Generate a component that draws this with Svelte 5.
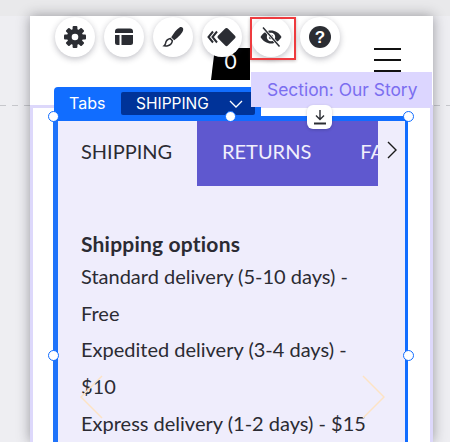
<script>
  const tools = ["gear", "layout", "brush", "layers", "eye", "help"];
  const handles = [
    { x: 53, y: 116 },
    { x: 230, y: 116 },
    { x: 408, y: 116 },
    { x: 53, y: 355 },
    { x: 408, y: 355 },
  ];
  const tabs = ["SHIPPING", "RETURNS", "FAQ"];
  const lines = [
    "Standard delivery (5-10 days) -",
    "Free",
    "Expedited delivery (3-4 days) -",
    "$10",
    "Express delivery (1-2 days) - $15",
  ];
</script>

<div class="app">
  <div class="topbar"></div>
  <div class="dash dash-left"></div>
  <div class="dash dash-right"></div>

  <div class="page">
    <header class="site-header">
      <div class="cart"><span>0</span></div>
      <div class="burger"><i></i><i></i><i></i></div>
    </header>
    <section class="section">
      <div class="tabs-widget">
        <div class="tab-strip">
          <div class="tab tab-active">{tabs[0]}</div>
          <div class="tab-rest">
            <span class="tab-second">{tabs[1]}</span>
            <span class="tab-third">{tabs[2]}</span>
          </div>
          <div class="tab-next">
            <svg width="12" height="18" viewBox="0 0 12 18"><path d="M2 1l8 8-8 8" fill="none" stroke="#1a1a1a" stroke-width="1.4" /></svg>
          </div>
        </div>
        <div class="tab-body">
          <div class="body-title">Shipping options</div>
          {#each lines as line}
            <p>{line}</p>
          {/each}
        </div>
      </div>
    </section>
  </div>

  <div class="toolbar">
    {#each tools as tool}
      <div class="tool">
        {#if tool === "gear"}
          <svg width="24" height="24" viewBox="0 0 24 24">
            <g fill="#2b2d33">
              <circle cx="12" cy="12" r="8" />
              {#each [0, 45, 90, 135, 180, 225, 270, 315] as a}
                <rect x="9.6" y="1" width="4.8" height="5" rx="1" transform="rotate({a} 12 12)" />
              {/each}
            </g>
            <circle cx="12" cy="12" r="3.3" fill="#fff" />
          </svg>
        {:else if tool === "layout"}
          <svg width="20" height="20" viewBox="0 0 20 20" fill="#2b2d33">
            <path d="M1 6V4.5A3 3 0 0 1 4 1.5h12a3 3 0 0 1 3 3V6z" />
            <path d="M1 8h4.5v10h-2A2.5 2.5 0 0 1 1 15.5z" />
            <path d="M7.5 8H19v7.5a2.5 2.5 0 0 1-2.5 2.5h-9z" />
          </svg>
        {:else if tool === "brush"}
          <svg width="24" height="24" viewBox="0 0 24 24" fill="#2b2d33">
            <path d="M18.5 2.5c1.8-1 4-.2 3.700 2.300-.4 2.800-4.600 7.500-9 10.500l-3-3c2.300-3.800 5.400-8.200 8.300-9.800z" />
            <path d="M9.300 13.600l2.100 2.100c-.4 2.600-2.300 4.500-4.500 5-1.300.3-2.700.3-3.800.1.900-.7 1.200-1.400 1.500-2.600.4-2.200 2.300-4 4.700-4.600z" fill="none" stroke="#2b2d33" stroke-width="1.5" />
          </svg>
        {:else if tool === "layers"}
          <svg width="32" height="24" viewBox="0 0 32 24">
            <path d="M20.5 3a1.800 1.800 0 0 1 1.300.5l7.200 7.200a1.800 1.800 0 0 1 0 2.600l-7.200 7.200a1.800 1.800 0 0 1-2.600 0L12 13.300a1.800 1.800 0 0 1 0-2.600l7.200-7.200a1.800 1.800 0 0 1 1.300-.5z" fill="#2b2d33" />
            <path d="M7 6.500L2.500 12l4.500 5.500M11 6.500L6.500 12l4.500 5.500" fill="none" stroke="#2b2d33" stroke-width="2" />
          </svg>
        {:else if tool === "eye"}
          <svg width="26" height="26" viewBox="0 0 26 26">
            <path d="M2.5 13C5 8.800 8.800 6.500 13 6.500s8 2.300 10.500 6.500c-2.500 4.200-6.300 6.500-10.500 6.500S5 17.200 2.500 13z" fill="#2b2d33" />
            <circle cx="13" cy="13" r="4.2" fill="#fff" />
            <circle cx="13" cy="13" r="2.2" fill="#2b2d33" />
            <path d="M5 3.500l16.500 19" stroke="#fff" stroke-width="3" />
            <path d="M5 3.500l16.500 19" stroke="#2b2d33" stroke-width="1.5" />
          </svg>
        {:else}
          <svg width="24" height="24" viewBox="0 0 24 24">
            <circle cx="12" cy="12" r="11" fill="#2b2d33" />
            <text x="12" y="18" text-anchor="middle" class="help-mark">?</text>
          </svg>
        {/if}
      </div>
    {/each}
  </div>
  <div class="highlight"></div>

  <div class="comp-tag">
    <span class="comp-name">Tabs</span>
    <div class="comp-select">
      <span>SHIPPING</span>
      <svg width="14" height="8" viewBox="0 0 14 8"><path d="M1 1l6 6 6-6" fill="none" stroke="#fff" stroke-width="1.3" /></svg>
    </div>
  </div>

  <div class="section-label">Section: Our Story</div>

  <div class="download">
    <svg width="16" height="16" viewBox="0 0 16 16" fill="none" stroke="#2b2d33">
      <path d="M8 1v9M4 6.500L8 10.500l4-4" stroke-width="1.4" />
      <path d="M2 14.500h12" stroke-width="2" />
    </svg>
  </div>

  {#each handles as h}
    <span class="handle" style="left: {h.x}px; top: {h.y}px"></span>
  {/each}

  <svg class="arrow arrow-left" width="24" height="44" viewBox="0 0 24 44"><path d="M22 1L1 22l21 21" fill="none" stroke="#fde3c4" stroke-width="1.5" /></svg>
  <svg class="arrow arrow-right" width="24" height="44" viewBox="0 0 24 44"><path d="M2 1l21 21L2 43" fill="none" stroke="#fde3c4" stroke-width="1.5" /></svg>
</div>

<style>
  :global(body) {
    margin: 0;
  }

  .app {
    position: relative;
    width: 450px;
    height: 442px;
    overflow: hidden;
    background: #eeeef2;
    font-family: Lato, "Liberation Sans", sans-serif;
    display: flex;
    flex-direction: column;
  }

  .topbar {
    height: 16px;
    flex: none;
    background: #e9e9eb;
  }

  .dash {
    position: absolute;
    top: 105px;
    height: 1px;
    background: repeating-linear-gradient(90deg, #c6c7cc 0 6px, transparent 6px 12px);
  }

  .dash-left {
    left: 0;
    width: 30px;
  }

  .dash-right {
    left: 434px;
    width: 16px;
  }

  .page {
    flex: 1;
    margin: 0 17px 0 30px;
    background: #fff;
    box-shadow: 0 0 12px rgba(30, 30, 40, 0.42);
    display: flex;
    flex-direction: column;
    position: relative;
  }

  .site-header {
    height: 89px;
    flex: none;
    display: flex;
    align-items: flex-start;
  }

  .cart {
    width: 39px;
    height: 32px;
    margin: 32px 0 0 181px;
    background: #000;
    clip-path: polygon(10% 0, 100% 0, 100% 100%, 0 100%);
    color: #fff;
    font-size: 21px;
    text-align: center;
    line-height: 22px;
    padding-top: 2px;
    box-sizing: border-box;
  }

  .burger {
    margin: 32px 0 0 124px;
    width: 27px;
    display: flex;
    flex-direction: column;
    gap: 9px;
  }

  .burger i {
    height: 2px;
    background: #111;
  }

  .section {
    flex: 1;
    border: 3px solid #ddd8fb;
    border-bottom: 0;
    padding: 8px 22px 0 20px;
    display: flex;
    min-height: 0;
  }

  .tabs-widget {
    flex: 1;
    background: #efedfc;
    border: solid #116dff;
    border-width: 5px 3px 0 5px;
    border-left-color: #1f73fa;
    color: #2b2b33;
  }

  .tab-strip {
    display: flex;
    height: 65px;
    font-size: 20px;
    line-height: 60px;
  }

  .tab {
    flex: none;
    width: 139px;
    padding-left: 23px;
    box-sizing: border-box;
  }

  .tab-rest {
    flex: none;
    width: 181px;
    background: #5f58cf;
    color: #f1effc;
    overflow: hidden;
    display: flex;
    white-space: nowrap;
    padding-left: 25px;
    box-sizing: border-box;
    gap: 49px;
  }

  .tab-next {
    flex: 1;
    display: flex;
    align-items: center;
    padding: 0 0 8px 8px;
  }

  .tab-body {
    padding: 43px 0 0 23px;
    font-size: 20px;
  }

  .body-title {
    font-size: 21px;
    letter-spacing: 0.2px;
    font-weight: 700;
    line-height: 29px;
  }

  .tab-body p {
    margin: 0;
    line-height: 36.7px;
    white-space: nowrap;
  }

  .toolbar {
    position: absolute;
    left: 55px;
    top: 17px;
    display: flex;
    gap: 9px;
  }

  .tool {
    width: 40px;
    height: 40px;
    border-radius: 50%;
    background: #fff;
    box-shadow: 0 2px 6px rgba(30, 30, 50, 0.28);
    display: flex;
    align-items: center;
    justify-content: center;
  }

  .help-mark {
    font: 700 17px "Liberation Sans", sans-serif;
    fill: #fff;
  }

  .highlight {
    position: absolute;
    left: 250px;
    top: 17px;
    width: 42px;
    height: 39px;
    border: 2px solid #ee3b3f;
    box-shadow: 0 1px 3px rgba(60, 30, 30, 0.3);
  }

  .comp-tag {
    position: absolute;
    left: 54px;
    top: 87px;
    width: 207px;
    height: 30px;
    box-sizing: border-box;
    background: #116dff;
    border-radius: 4px 4px 0 0;
    color: #fff;
    display: flex;
    padding: 5px 6px 2px 15px;
    font-family: Inter, "Liberation Sans", sans-serif;
  }

  .comp-name {
    width: 52px;
    font-size: 16px;
    line-height: 23px;
  }

  .comp-select {
    flex: 1;
    background: #003399;
    border-radius: 2px;
    display: flex;
    align-items: center;
    justify-content: space-between;
    padding: 0 12px 0 15px;
    font-size: 15.5px;
  }

  .section-label {
    position: absolute;
    left: 251px;
    top: 72px;
    width: 181px;
    height: 35px;
    box-sizing: border-box;
    padding-left: 16px;
    background: #dcd6ff;
    color: #7b6ef0;
    font-family: Inter, "Liberation Sans", sans-serif;
    font-size: 17.4px;
    line-height: 35px;
    white-space: nowrap;
  }

  .download {
    position: absolute;
    left: 307px;
    top: 105px;
    width: 25px;
    height: 24px;
    border-radius: 6px;
    background: #fff;
    box-shadow: 0 1px 3px rgba(30, 30, 50, 0.25);
    display: flex;
    align-items: center;
    justify-content: center;
  }

  .handle {
    position: absolute;
    width: 11px;
    height: 11px;
    margin: -5.5px 0 0 -5.5px;
    box-sizing: border-box;
    border-radius: 50%;
    background: #fff;
    border: 1.5px solid #116dff;
  }

  .arrow {
    position: absolute;
    top: 375px;
  }

  .arrow-left {
    left: 80px;
  }

  .arrow-right {
    left: 361px;
  }
</style>
